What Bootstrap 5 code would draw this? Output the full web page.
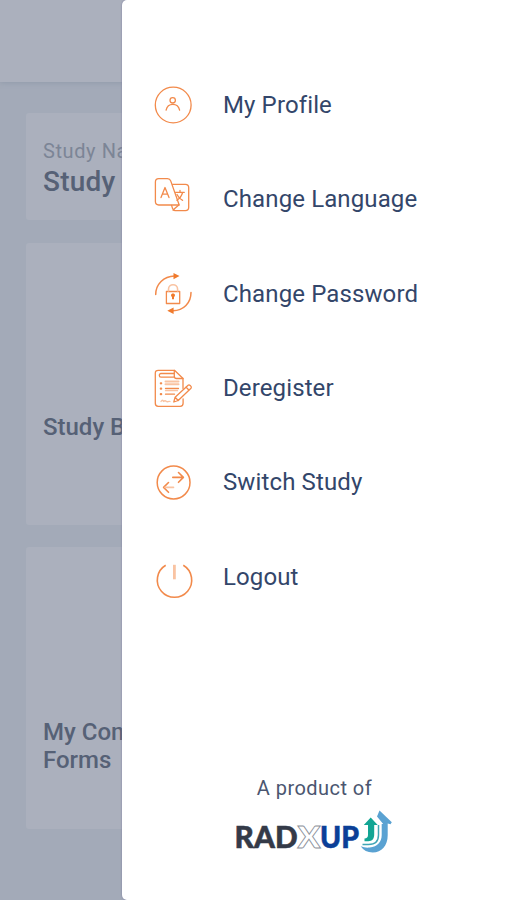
<!DOCTYPE html>
<html lang="en">
<head>
<meta charset="utf-8">
<meta name="viewport" content="width=device-width, initial-scale=1">
<title>Study menu</title>
<link href="https://cdn.jsdelivr.net/npm/bootstrap@5.3.0/dist/css/bootstrap.min.css" rel="stylesheet">
<style>
  body { font-family: Roboto, "Liberation Sans", sans-serif; color: #2b3d5c; }
  .screen { height: 900px; }
  .underlay { width: 126px; background: #a3aab8; color: #566176; }
  .topbar { height: 82px; background: #abb0bd; box-shadow: 0 1px 5px rgba(125,138,156,.45); }
  .tiles { padding: 31px 0 0 26px; gap: 23px; }
  .tile { width: 300px; background: #abb0bd; border-radius: 3px; padding-left: 17px; }
  .tile-name { height: 107px; padding-top: 26px; }
  .tile-big { height: 282px; padding-top: 170px; font-size: 24px; line-height: 28px; font-weight: 500; }
  .tile-forms { margin-top: -1px; padding-top: 171px; }
  .label-small { font-size: 20px; line-height: 24px; letter-spacing: .6px; color: #7c8596; }
  .label-title { font-size: 28px; line-height: 37px; font-weight: 500; letter-spacing: .2px; }
  .drawer { margin-left: -4px; border-radius: 5px 0 0 5px; box-shadow: 0 0 2px #77779b; padding-top: 57.600px; }
  .entry { height: 94.4px; padding-left: 31px; gap: 30px; font-size: 24px; letter-spacing: .12px; color: #33466a; }
  .entry svg { overflow: visible; fill: none; stroke: #f28a4b; stroke-width: 1.3; stroke-linecap: round; stroke-linejoin: round; }
  .entry svg .solid { fill: #f07a2c; stroke: none; }
  .entry svg .soft { stroke: #f9c3a2; }
  .maker { margin-top: 150px; font-size: 20px; line-height: 28px; letter-spacing: .45px; color: #4b5670; padding-left: 1px; }
  .brand { margin-top: 4px; }
</style>
</head>
<body>
<div class="screen d-flex overflow-hidden bg-white">
  <div class="underlay flex-shrink-0 overflow-hidden">
    <div class="topbar"></div>
    <div class="tiles d-flex flex-column">
      <div class="tile tile-name">
        <div class="label-small">Study Name</div>
        <div class="label-title">Study 1</div>
      </div>
      <div class="tile tile-big">Study Burst</div>
      <div class="tile tile-big tile-forms">My Completed<br>Forms</div>
    </div>
  </div>

  <nav class="drawer position-relative flex-grow-1 bg-white">
    <a class="entry d-flex align-items-center text-decoration-none" href="#">
      <svg width="40" height="40" viewBox="0 0 40 40"><circle cx="20.2" cy="20" r="17.9"/><circle cx="19.7" cy="15.3" r="2.7"/><path d="M13.1 25.2c.8-3.6 3.5-5.8 6.7-5.8s6 2.2 6.8 5.8"/></svg>
      <span>My Profile</span>
    </a>
    <a class="entry d-flex align-items-center text-decoration-none" href="#">
      <svg width="40" height="40" viewBox="0 0 40 40"><path d="M5.7-.4h8.8c1.7 0 2.7.8 3.2 2.3L26.2 26H5.8c-2.2 0-3.4-1.3-3.4-3.4V3C2.4.8 3.6-.4 5.7-.4z"/><path d="M19.600 5.300h12.800c2.200 0 3.300 1.200 3.300 3.300v19.600c0 2.200-1.200 3.400-3.300 3.400H22.500c-1.600 0-2.600-.8-3-2.200l-.9-3M20 31l5.800-5"/><path d="M8 18.600 12 8.500l4 10.100M9.500 15.200h5M22.500 13.300h8.800M27 11.500v1.800M29.600 13.500c-1 3.500-2.800 6-5.700 7.700M24 15.500c1.200 2.700 3 4.600 5.600 5.800"/></svg>
      <span>Change Language</span>
    </a>
    <a class="entry d-flex align-items-center text-decoration-none" href="#">
      <svg width="40" height="40" viewBox="0 0 40 40"><path d="M2.700 20.500C2.700 10.300 10.700 2.200 21.500 2M38 18.500c0 10.500-7.500 18.200-18 18.200" stroke-width="1.500"/><path class="solid" d="M20.500-1.100 26.500 2l-6 3.200zM20.600 33.500l-6.300 3.200 6.300 3.200z"/><rect x="13.400" y="17.500" width="13.300" height="12"/><path class="soft" stroke-width="1.600" d="M15.500 17v-1.800c0-5.900 9.100-5.900 9.100 0V17"/><path class="solid" d="M18 21.300c0-2.500 4-2.500 4 0 0 .8-.4 1.300-1 1.700v2.300h-2V23c-.6-.4-1-.900-1-1.700z"/></svg>
      <span>Change Password</span>
    </a>
    <a class="entry d-flex align-items-center text-decoration-none" href="#">
      <svg width="40" height="40" viewBox="0 0 40 40"><path d="M30 20.500V10.500L21.500 2.300H5.200c-1.900 0-2.900 1-2.900 2.900v30c0 2 1 3.100 2.900 3.100h22c1.900 0 2.900-1 2.900-3v-4.500"/><path d="M21.300 2.500v5.700c0 1.500.8 2.300 2.300 2.300H30M21 5.500H8c-2.300 0-2.300 3.700 0 3.700h13"/><path stroke-width="2.200" d="M7.800 15.300h.4M7.800 20.700h.4M7.800 26.200h.4"/><path class="soft" stroke-width="2" d="M12.500 13.500h13M12.500 16.300h13"/><path d="M12.500 20.500h13M12.500 26.200h9"/><path class="soft" d="M12.500 22.700h12"/><path class="soft" d="M8 33.500c1-1.700 2-1.700 2.500 0 1-1 2-1 3 0s2-.8 3.500 0"/><path fill="#fff" d="m20.800 34 1.300-4.800 13-12c1.200-1 4.200 1.500 2.900 3L25.200 32.500zM33 19l3 3.200M22.100 29.200l3.100 3.300"/></svg>
      <span>Deregister</span>
    </a>
    <a class="entry d-flex align-items-center text-decoration-none" href="#">
      <svg width="40" height="40" viewBox="0 0 40 40"><circle cx="20.600" cy="20.500" r="16.400" stroke-width="1.500"/><path stroke-width="1.600" d="M19.800 15.400h10.500M25.500 10.500l4.900 4.900-4.900 4.900M15.500 20.500l-4.900 4.900 4.900 4.900"/><path class="soft" stroke-width="1.600" d="M12 25.400h8.500"/></svg>
      <span>Switch Study</span>
    </a>
    <a class="entry d-flex align-items-center text-decoration-none" href="#">
      <svg width="40" height="40" viewBox="0 0 40 40"><path stroke-width="1.600" stroke-linecap="butt" d="M12.700 8.300a17.200 17.200 0 1 0 17.600 0"/><path class="soft" stroke-width="2.800" stroke-linecap="butt" d="M21.400 7.800v14.500"/></svg>
      <span>Logout</span>
    </a>

    <div class="maker text-center">A product of</div>
    <svg class="brand d-block mx-auto" width="160" height="50" viewBox="234 807 160 50" font-family="Lato, sans-serif" font-size="29.500" font-weight="900" aria-label="RADxUP">
      <text x="234.600" y="849.300" textLength="63" lengthAdjust="spacingAndGlyphs" fill="#343a48" stroke="#343a48" stroke-width=".5">RAD</text>
      <text x="297.500" y="849.300" textLength="23" lengthAdjust="spacingAndGlyphs" fill="#fff" stroke="#8a8f99" stroke-width=".8">X</text>
      <text x="320" y="849.300" textLength="39" lengthAdjust="spacingAndGlyphs" fill="#0b3f97" stroke="#0b3f97" stroke-width=".5">UP</text>
      <path fill="#12a594" d="m370.700 818.500 7 7.500h-3.500v9.500c0 4.300-2 6.700-6 6.700h-3.700v-2.600c2.300-.2 3.500-1.300 3.500-3.600v-10h-4.200z"/>
      <path fill="#5aa2d2" d="m379.500 811.500 12.300 11.700-1.300 2-2.800-.7v11.800c0 10.500-6 17.200-15 17.200-5.200 0-9.200-2-12-6.200 3 1.300 6 1.700 9 1.300 7.800-1 12-5.600 12-12.600v-11h1.500l-6.200-7.600z"/>
      <path fill="none" stroke="#3fa5b5" stroke-width="1.500" d="M362.500 845.500h6c6.500 0 10-3.300 10-9.500v-10"/>
    </svg>
  </nav>
</div>
<script src="https://cdn.jsdelivr.net/npm/bootstrap@5.3.0/dist/js/bootstrap.bundle.min.js"></script>
</body>
</html>
